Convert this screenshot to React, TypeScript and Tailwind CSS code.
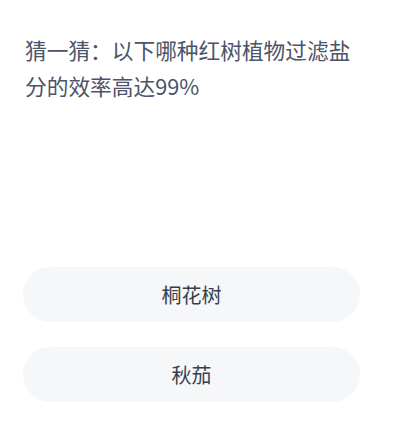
export default function App() {
  const options = ["桐花树", "秋茄"];

  return (
    <div
      className="w-[400px] h-[436px] bg-white overflow-hidden"
      style={{ fontFamily: '"Noto Sans CJK SC", "Noto Sans", sans-serif' }}
    >
      <div className="pl-[23px] pr-[40px] pt-[32px]">
        <p className="pl-[2px] text-[21.7px] leading-[36px] text-[#4b5468]">
          猜一猜：以下哪种红树植物过滤盐分的效率高达99%
        </p>

        <div className="mt-[163px] flex flex-col gap-[25px]">
          {options.map((o) => (
            <button
              key={o}
              className="h-[55px] w-full rounded-full bg-[#f6f7f8] text-[20px] text-[#353f50]"
            >
              {o}
            </button>
          ))}
        </div>
      </div>
    </div>
  );
}
